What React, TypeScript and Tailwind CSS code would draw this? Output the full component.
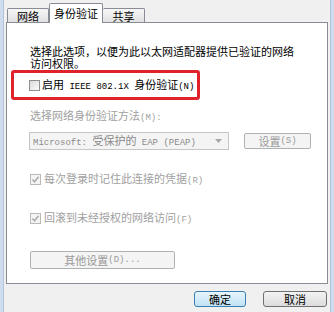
import React from "react";

const cjk = "font-[family-name:'Noto_Sans_CJK_SC',sans-serif]";
const mono = "font-[family-name:'Liberation_Mono',monospace] text-[9px]";

const Check = ({ checked = false, disabled = false }: { checked?: boolean; disabled?: boolean }) => (
  <span
    className={`flex h-[11px] w-[11px] shrink-0 items-center justify-center border ${
      disabled ? "border-[#b9b9b9] bg-[#f4f4f4]" : "border-[#8f8f8f] bg-gradient-to-br from-[#dcdcdc] to-[#fafafa]"
    }`}
  >
    {checked && (
      <svg width="9" height="9" viewBox="0 0 9 9">
        <path d="M1.5 4.5 L3.5 6.8 L7.6 1.8" fill="none" stroke="#adadad" strokeWidth="1.6" />
      </svg>
    )}
  </span>
);

export default function App() {
  return (
    <div className={`flex h-[312px] w-[334px] overflow-hidden bg-[#f0f0f0] text-[11px] leading-[12px] text-black ${cjk}`}>
      {/* window frame, left */}
      <div className="w-[4px] shrink-0 border-r border-[#b4c4d8] bg-[#cddcee]" />

      <div className="flex flex-1 flex-col px-[2px]">
        {/* tabs */}
        <div className="relative z-10 flex h-[22px] items-end pl-[1px]">
          <div className="flex h-[14px] w-[42px] items-center justify-center rounded-t-[2px] border border-b-0 border-[#898c95] bg-gradient-to-b from-[#f7f7f7] to-[#e1e1e1]">
            网络
          </div>
          <div className="-mb-px flex h-[20px] w-[54px] items-start justify-center rounded-t-[2px] border border-b-0 border-[#898c95] bg-white pt-[3px]">
            身份验证
          </div>
          <div className="flex h-[14px] w-[42px] items-center justify-center rounded-t-[2px] border border-b-0 border-l-0 border-[#898c95] bg-gradient-to-b from-[#f7f7f7] to-[#e1e1e1]">
            共享
          </div>
        </div>

        {/* panel */}
        <div className="flex h-[262px] flex-col border border-[#898c95] bg-white">
          <p className="pl-[23px] pt-[22px] leading-[12px]">
            选择此选项，以便为此以太网适配器提供已验证的网络
            <br />
            访问权限。
          </p>

          <div className="ml-[4px] mt-[1px] flex h-[30px] w-[189px] items-center gap-[2px] rounded-[3px] border-[3px] border-[#e0222a] pl-[15px]">
            <Check />
            <span className="whitespace-nowrap">
              启用<span className={mono}> IEEE 802.1X </span>身份验证<span className={mono}>(N)</span>
            </span>
          </div>

          <div className="mt-[9px] pl-[23px] text-[#a0a0a0]">
            选择网络身份验证方法<span className={mono}>(M):</span>
          </div>

          <div className="mt-[8px] flex items-center pl-[22px]">
            <div className="flex h-[18px] w-[200px] items-center justify-between border border-[#c6c6c6] bg-[#f4f4f4] pl-[3px] pr-[6px] text-[#8a8a8a]">
              <span className="whitespace-nowrap">
                <span className={mono}>Microsoft: </span>受保护的<span className={mono}> EAP (PEAP)</span>
              </span>
              <svg width="7" height="4" viewBox="0 0 7 4">
                <path d="M0 0 H7 L3.5 4 Z" fill="#a8a8a8" />
              </svg>
            </div>
            <div className="ml-[15px] flex h-[16px] w-[67px] items-center justify-center rounded-[2px] border border-[#adb2b5] bg-[#f4f4f4] text-[#9a9a9a]">
              设置<span className={mono}>(S)</span>
            </div>
          </div>

          <div className="mt-[22px] flex items-center gap-[3px] pl-[23px] text-[#a0a0a0]">
            <Check checked disabled />
            <span>
              每次登录时记住此连接的凭据<span className={mono}>(R)</span>
            </span>
          </div>

          <div className="mt-[24px] flex items-center gap-[3px] pl-[23px] text-[#a0a0a0]">
            <Check checked disabled />
            <span>
              回滚到未经授权的网络访问<span className={mono}>(F)</span>
            </span>
          </div>

          <div className="ml-[23px] mt-[25px] flex h-[18px] w-[145px] items-center justify-center rounded-[2px] border border-[#adb2b5] bg-[#f4f4f4] text-[#9a9a9a]">
            其他设置<span className={mono}>(D)...</span>
          </div>
        </div>

        {/* dialog buttons */}
        <div className="mt-[7px] flex justify-end gap-[17px] pr-[1px]">
          <div className="flex h-[16px] w-[52px] items-center justify-center rounded-[3px] border border-[#3c7fb1] bg-gradient-to-b from-[#e8f5fc] to-[#bfe2f5]">
            确定
          </div>
          <div className="flex h-[16px] w-[64px] items-center justify-center rounded-[3px] border border-[#707070] bg-gradient-to-b from-[#f3f3f3] to-[#dcdcdc]">
            取消
          </div>
        </div>
      </div>

      {/* window frame, right */}
      <div className="w-[4px] shrink-0 border-l border-[#b4c4d8] bg-[#cddcee]" />
    </div>
  );
}
